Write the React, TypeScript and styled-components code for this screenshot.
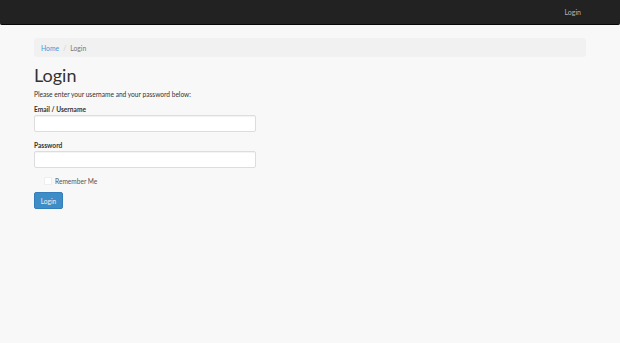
import React from "react";
import styled, { createGlobalStyle } from "styled-components";

const GlobalStyle = createGlobalStyle`
  html, body {
    margin: 0;
    padding: 0;
    background: #f8f8f8;
    font-family: Lato, "Liberation Sans", sans-serif;
    color: #333;
    -webkit-font-smoothing: antialiased;
  }
`;

const App = () => {
  return (
    <>
      <GlobalStyle />
      <Navbar>
        <NavLink>Login</NavLink>
      </Navbar>
      <Container>
        <Breadcrumb>
          <Crumb href="#">Home</Crumb>
          <Divider>/</Divider>
          <Current>Login</Current>
        </Breadcrumb>
        <Title>Login</Title>
        <Intro>Please enter your username and your password below:</Intro>
        <Form>
          <Field>
            <Label>Email / Username</Label>
            <Input type="text" />
          </Field>
          <Field>
            <Label>Password</Label>
            <Input type="password" />
          </Field>
          <CheckRow>
            <Check type="checkbox" />
            <CheckLabel>Remember Me</CheckLabel>
          </CheckRow>
          <Button type="button">Login</Button>
        </Form>
      </Container>
    </>
  );
};

export default App;

const Navbar = styled.nav`
  height: 24px;
  background: #222;
  border-bottom: 1px solid #080808;
  border-radius: 0 0 2px 2px;
  display: flex;
  justify-content: flex-end;
  align-items: center;
  padding: 0 39px 0 0;
`;

const NavLink = styled.a`
  font-size: 7px;
  color: #b5b5b5;
  line-height: 1;
`;

const Container = styled.main`
  width: 552px;
  margin: 13px auto 0 34px;
`;

const Breadcrumb = styled.div`
  height: 19px;
  background: #f1f1f1;
  border-radius: 3px;
  display: flex;
  align-items: center;
  padding: 0 7px;
  font-size: 6.8px;
  gap: 4px;
`;

const Crumb = styled.a`
  color: #3a9ad9;
  text-decoration: none;
`;

const Divider = styled.span`
  color: #ccc;
`;

const Current = styled.span`
  color: #777;
`;

const Title = styled.h1`
  margin: 6px 0 0;
  font-size: 18px;
  font-weight: 400;
  line-height: 24px;
  color: #333;
`;

const Intro = styled.p`
  margin: 2px 0 0;
  font-size: 6.6px;
  line-height: 10px;
  color: #333;
`;

const Form = styled.form`
  display: flex;
  flex-direction: column;
  align-items: flex-start;
  margin-top: 5px;
`;

const Field = styled.div`
  display: flex;
  flex-direction: column;
  margin-bottom: 8px;
`;

const Label = styled.label`
  font-size: 6.6px;
  font-weight: 700;
  line-height: 10px;
  margin-bottom: 1px;
`;

const Input = styled.input`
  width: 222px;
  height: 17px;
  box-sizing: border-box;
  border: 1px solid #ddd;
  border-radius: 2px;
  background: #fff;
  box-shadow: inset 0 1px 1px rgba(0, 0, 0, 0.05);
  margin: 0;
  padding: 0 4px;
`;

const CheckRow = styled.div`
  display: flex;
  align-items: center;
  gap: 3px;
  padding-left: 10px;
`;

const Check = styled.input`
  appearance: none;
  width: 8px;
  height: 8px;
  margin: 0;
  background: #fff;
  border: 1px solid #eee;
  border-radius: 1px;
`;

const CheckLabel = styled.span`
  font-size: 6.6px;
  color: #555;
  line-height: 10px;
`;

const Button = styled.button`
  margin-top: 6px;
  width: 29px;
  height: 17px;
  padding: 0;
  background: #3d8ec7;
  border: 1px solid #357ebd;
  border-radius: 2px;
  color: #e8f1f8;
  font-family: inherit;
  font-size: 6.6px;
`;
